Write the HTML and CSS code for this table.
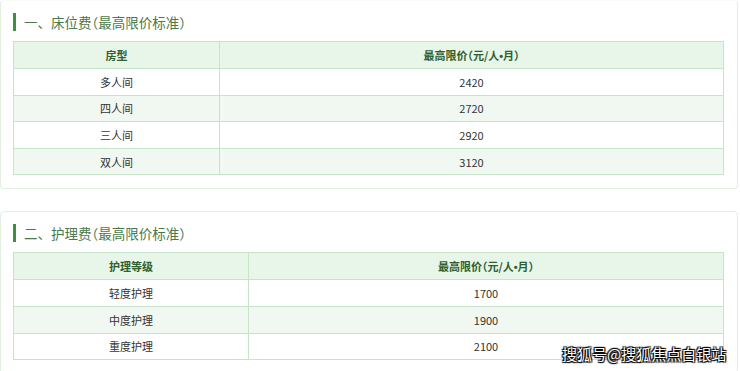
FILE: index.html
```html
<!DOCTYPE html>
<html lang="zh-CN">
<head>
  <meta charset="UTF-8">
  <title>收费标准</title>
  <link rel="stylesheet" href="styles.css">
</head>
<body>
  <div class="card first">
    <h2 class="title">一、床位费<span class="paren">（最高限价标准）</span></h2>
    <table class="price bed">
      <thead>
        <tr><th class="c1">房型</th><th><span class="paren">最高限价（元/人<span class="dot">•</span>月）</span></th></tr>
      </thead>
      <tbody>
        <tr><td>多人间</td><td>2420</td></tr>
        <tr><td>四人间</td><td>2720</td></tr>
        <tr><td>三人间</td><td>2920</td></tr>
        <tr><td>双人间</td><td>3120</td></tr>
      </tbody>
    </table>
  </div>

  <div class="card">
    <h2 class="title">二、护理费<span class="paren">（最高限价标准）</span></h2>
    <table class="price care">
      <thead>
        <tr><th class="c1">护理等级</th><th><span class="paren">最高限价（元/人<span class="dot">•</span>月）</span></th></tr>
      </thead>
      <tbody>
        <tr><td>轻度护理</td><td>1700</td></tr>
        <tr><td>中度护理</td><td>1900</td></tr>
        <tr><td>重度护理</td><td>2100</td></tr>
      </tbody>
    </table>
  </div>

  <div class="mark">搜狐号@搜狐焦点白银站</div>
</body>
</html>
```

FILE: styles.css
```css
body {
  margin: 0;
  background: #fff;
  font-family: "Noto Sans CJK SC", "Noto Sans", sans-serif;
  color: #333;
  overflow: hidden;
}
.card {
  width: 711px;
  border: 1px solid #e2f0e2;
  border-radius: 4px;
  padding: 12px 13px 13px 12px;
  margin-top: 22px;
}
.card.first {
  margin-top: 0;
  border-top-color: #f6fbf6;
}
.title {
  margin: 0 0 10px 0;
  height: 18px;
  border-left: 3px solid #3f8f43;
  padding-left: 8px;
  font-size: 13.5px;
  font-weight: normal;
  line-height: 18px;
  color: #4a7a4a;
}
.paren {
  font-feature-settings: "halt";
}
.dot {
  font-family: "Liberation Sans", sans-serif;
}
table {
  border-collapse: collapse;
  width: 711px;
  table-layout: fixed;
}
th, td {
  border: 1px solid #c6e5c8;
  height: 25.6px;
  padding: 0;
  text-align: center;
  font-size: 11px;
}
th {
  background-color: #e8f5e9;
  color: #2f5f2f;
  font-weight: bold;
  height: 26px;
}
tbody tr:nth-child(even) td {
  background-color: #f1f8f1;
}
.bed .c1 {
  width: 205px;
}
.care .c1 {
  width: 234px;
}
.mark {
  position: absolute;
  left: 562px;
  top: 343px;
  font-size: 15px;
  color: #fff;
  text-shadow: 0 0 1px #000, 1px 1px 1px #000, -1px -1px 1px #000, 1px -1px 1px #000, -1px 1px 1px #000;
}
```
